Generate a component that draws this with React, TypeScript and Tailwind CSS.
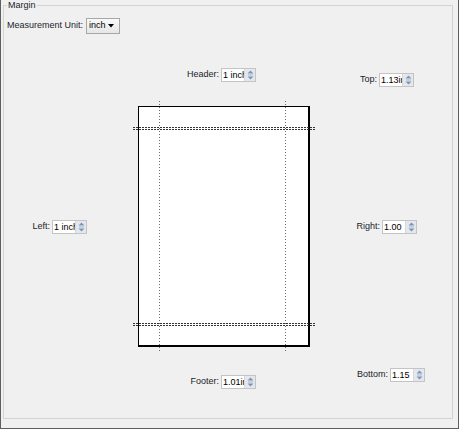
import React from "react";

const Spinner = ({ value }: { value: string }) => (
  <div className="flex h-[14px] w-[35px] border border-[#c4c4c4] bg-white">
    <div className="w-[22px] overflow-hidden whitespace-nowrap pl-[1px] text-[9px] leading-[12px] text-black">
      {value}
    </div>
    <div className="flex flex-1 items-center justify-center border-l border-[#d8d8d8] bg-[#e4e8ee]">
      <svg width="7" height="10" viewBox="0 0 7 10">
        <path d="M3.5 0.5 L6.5 3.5 L0.5 3.5 Z" fill="#7c95b6" />
        <line x1="1" y1="5" x2="6" y2="5" stroke="#a9b7c9" strokeWidth="1" />
        <path d="M0.5 6.5 L6.5 6.5 L3.5 9.5 Z" fill="#7c95b6" />
      </svg>
    </div>
  </div>
);

const Field = ({ label, value, width }: { label: string; value: string; width: string }) => (
  <div className={`flex items-center justify-end gap-[2px] ${width}`}>
    <span className="text-[9px] text-[#1c1c2a] whitespace-nowrap">{label}</span>
    <Spinner value={value} />
  </div>
);

const PagePreview = () => (
  <svg width="172" height="241" viewBox="0 0 172 241" className="overflow-visible">
    <rect x="0" y="0" width="172" height="241" fill="#ffffff" />
    <line x1="0" y1="0.5" x2="172" y2="0.5" stroke="#000" />
    <line x1="0.5" y1="0" x2="0.5" y2="241" stroke="#000" />
    <line x1="171" y1="0" x2="171" y2="241" stroke="#000" strokeWidth="2" />
    <line x1="0" y1="240" x2="172" y2="240" stroke="#000" strokeWidth="2" />
    {/* side margins */}
    <line x1="21.5" y1="-5" x2="21.5" y2="246" stroke="#6a6a6a" strokeDasharray="1 2" />
    <line x1="147.5" y1="-5" x2="147.5" y2="246" stroke="#6a6a6a" strokeDasharray="1 2" />
    {/* header / top */}
    <line x1="-5" y1="21.5" x2="177" y2="21.5" stroke="#333" strokeDasharray="2 1" />
    <line x1="-5" y1="23.5" x2="177" y2="23.5" stroke="#333" strokeDasharray="2 1" />
    {/* footer / bottom */}
    <line x1="-5" y1="217.5" x2="177" y2="217.5" stroke="#333" strokeDasharray="2 1" />
    <line x1="-5" y1="219.5" x2="177" y2="219.5" stroke="#333" strokeDasharray="2 1" />
  </svg>
);

export default function App() {
  return (
    <div
      className="h-[429px] w-[459px] border-x border-b border-[#5f5f5f] bg-[#f0f0f0]"
      style={{ fontFamily: '"Liberation Sans", Arial, sans-serif' }}
    >
      <fieldset className="ml-[2px] h-[419px] w-[450px] border border-[#d3d3d3]">
        <legend className="ml-[3px] px-[1px] text-[9px] leading-[11px] text-[#1c1c2a]">Margin</legend>

        <div className="mt-[7px] flex items-center gap-[3px] pl-[3px]">
          <span className="text-[9px] text-[#1c1c2a]">Measurement Unit:</span>
          <div className="flex h-[16px] w-[34px] items-center justify-between border border-[#a7a7a7] bg-gradient-to-b from-[#fafafa] to-[#e6e6e6] pl-[2px] pr-[5px]">
            <span className="text-[9px] text-black">inch</span>
            <svg width="6" height="4" viewBox="0 0 6 4">
              <path d="M0 0 L6 0 L3 3.5 Z" fill="#000" />
            </svg>
          </div>
        </div>

        <div className="grid grid-cols-[134px_172px_1fr] grid-rows-[72px_241px_1fr]">
          <div />
          <div className="flex items-end pb-[24px]">
            <Field label="Header:" value="1 inch" width="w-[118px]" />
          </div>
          <div className="flex items-end pb-[19px]">
            <Field label="Top:" value="1.13in" width="w-[104px]" />
          </div>

          <div className="flex items-center pt-[1px]">
            <Field label="Left:" value="1 inch" width="w-[83px]" />
          </div>
          <PagePreview />
          <div className="flex items-center pt-[1px]">
            <Field label="Right:" value="1.00" width="w-[107px]" />
          </div>

          <div />
          <div className="pt-[28px]">
            <Field label="Footer:" value="1.01in" width="w-[118px]" />
          </div>
          <div className="pt-[21px]">
            <Field label="Bottom:" value="1.15" width="w-[115px]" />
          </div>
        </div>
      </fieldset>
    </div>
  );
}
